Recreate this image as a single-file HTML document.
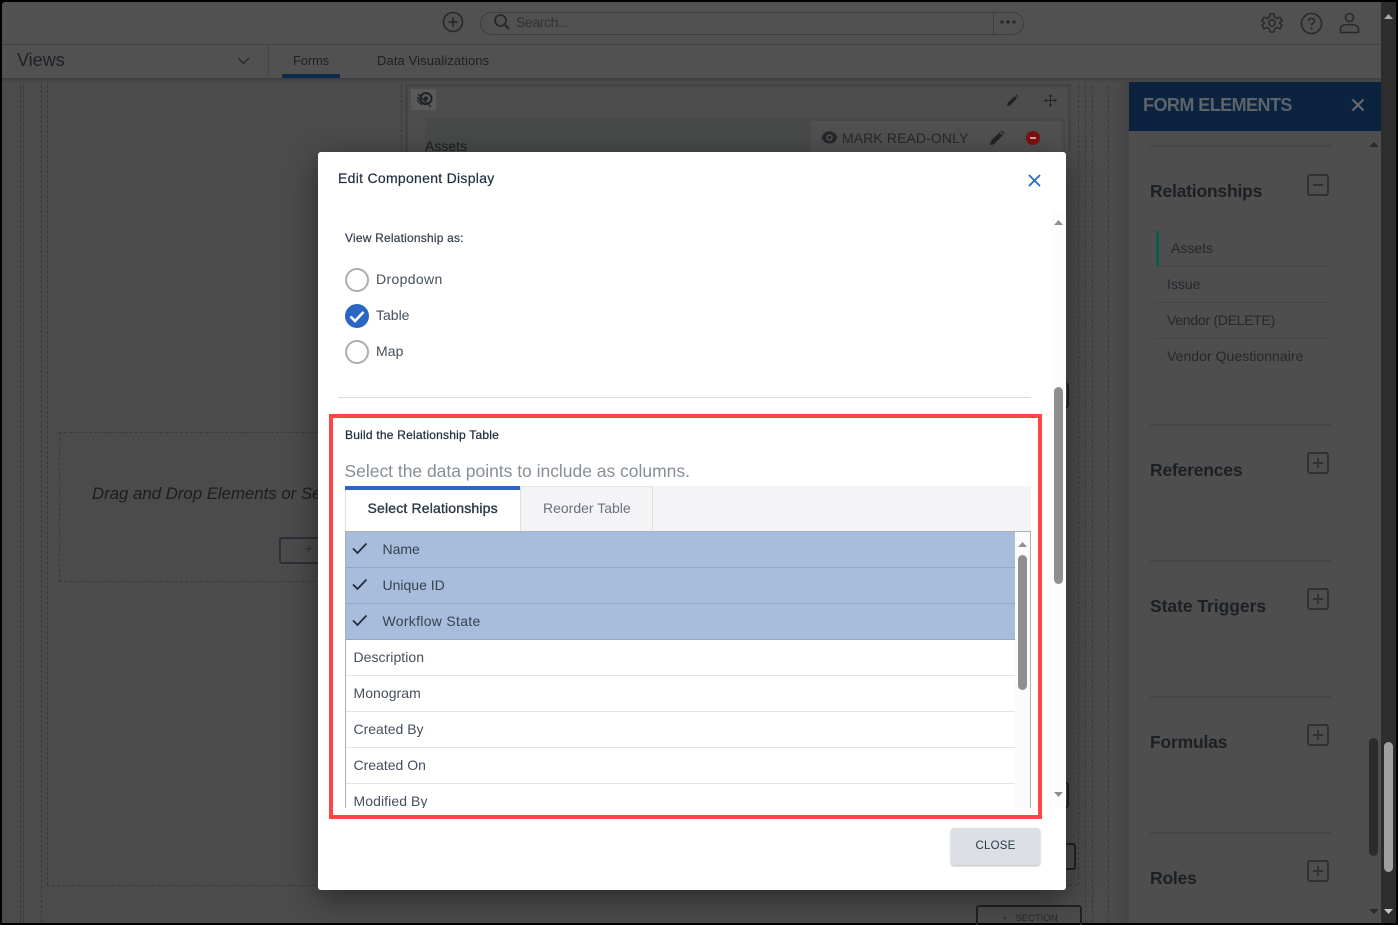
<!DOCTYPE html>
<html><head><meta charset="utf-8"><style>
*{box-sizing:border-box}
html,body{margin:0;padding:0;width:1398px;height:925px;overflow:hidden;background:#000}
body{position:relative;font-family:"Liberation Sans",sans-serif}
.a{position:absolute}
.t{position:absolute;white-space:nowrap;line-height:20px;height:20px}
.row{position:absolute;left:346px;width:669px;height:36px;background:#fff;border-bottom:1px solid #e2e4e7}
.sel{background:#a8bcdc;border-bottom:1px solid #93a6c6}
.dv{position:absolute;width:0;border-left:1px dashed #3a3a3a}
.h{font-size:17.5px;font-weight:bold;color:#1c2024;letter-spacing:-.2px}
svg{position:absolute;overflow:visible}
</style></head><body>
<div class="a" style="left:2px;top:2px;width:1394px;height:921px;background:#4b4b4b;overflow:hidden;border-radius:3px 0 0 0"></div>

<!-- background structure -->
<div class="dv" style="left:20px;top:80px;height:843px"></div>
<div class="a" style="left:23px;top:80px;width:1px;height:843px;background:#404040"></div>
<div class="dv" style="left:41px;top:80px;height:843px"></div>
<div class="dv" style="left:47px;top:80px;height:805px"></div>
<div class="a" style="left:47px;top:885px;width:1030px;border-top:1px dashed #3a3a3a"></div>
<div class="dv" style="left:401px;top:80px;height:72px"></div>
<div class="a" style="left:59px;top:432px;width:260px;height:150px;border:1px dashed #3a3a3a;border-right:0"></div>
<div class="t" style="left:92px;top:484px;font-size:16.8px;font-style:italic;color:#1a1d20;width:226px;overflow:hidden">Drag and Drop Elements or Se</div>
<div class="a" style="left:279px;top:537px;width:50px;height:27px;border:2px solid #2b3138;border-radius:3px"></div>
<div class="t" style="left:305px;top:539px;font-size:13px;color:#2b3138">+</div>

<div class="a" style="left:405px;top:84px;width:666px;height:68px;background:#4d4d4d;border:3px solid #444;border-bottom:0"></div>
<div class="a" style="left:411px;top:89px;width:25px;height:21px;background:#5a5a5a"></div>
<svg style="left:416px;top:91px" width="18" height="17" viewBox="0 0 18 17"><circle cx="10" cy="7.500" r="5.500" fill="none" stroke="#1f2226" stroke-width="2"/><circle cx="10" cy="7.500" r="2" fill="#1f2226"/><path d="M2 3L15 16M1 6L9 14M1 9L6 14" stroke="#1f2226" stroke-width="1.300"/></svg>
<svg style="left:1006px;top:94px" width="13" height="13" viewBox="0 0 13 13"><path d="M1 12L1.600 9L8.500 2L11 4.500L4 11.500Z M9.500 1L10.500 .4L12.600 2.500L12 3.500Z" fill="#202428"/></svg>
<svg style="left:1044px;top:94px" width="13" height="13" viewBox="0 0 13 13"><path d="M6.500 1V12M1 6.500H12" stroke="#202428" stroke-width="1"/><path d="M6.500 0L4.500 2.500H8.500ZM6.500 13L4.500 10.500H8.500ZM0 6.500L2.500 4.500V8.500ZM13 6.500L10.500 4.500V8.500Z" fill="#202428"/></svg>
<div class="a" style="left:425px;top:118px;width:640px;height:34px;background:#474a48"></div>
<div class="a" style="left:811px;top:121px;width:251px;height:31px;background:#505050"></div>
<div class="t" style="left:425px;top:136px;font-size:14px;color:#1a1d20">Assets</div>
<svg style="left:821px;top:130px" width="17" height="15" viewBox="0 0 17 15"><path d="M.5 7.500C3 2 5.500 1.500 8.500 1.500C11.500 1.500 14 2 16.500 7.500C14 13 11.500 13.500 8.500 13.500C5.500 13.500 3 13 .5 7.500Z" fill="#24282c"/><circle cx="8.500" cy="7.500" r="3.300" fill="#505050"/><circle cx="8.500" cy="7.500" r="1.700" fill="#24282c"/></svg>
<div class="t" style="left:842px;top:128px;font-size:14px;color:#24282c;letter-spacing:.1px">MARK READ-ONLY</div>
<svg style="left:989px;top:130px" width="16" height="16" viewBox="0 0 16 16"><path d="M1 15L1.800 11L10.500 2.500L13.500 5.500L5 14.200Z M11.500 1.500L12.700 .6L15.400 3.300L14.500 4.500Z" fill="#202428"/></svg>
<div class="a" style="left:1026px;top:131px;width:14px;height:14px;border-radius:7px;background:#7d1010"></div>
<div class="a" style="left:1030px;top:137px;width:6px;height:2px;background:#c9a0a0"></div>

<div class="dv" style="left:1078px;top:80px;height:805px"></div>
<div class="dv" style="left:1085px;top:80px;height:843px"></div>
<div class="dv" style="left:1092px;top:80px;height:843px"></div>
<div class="dv" style="left:1108px;top:80px;height:843px"></div>
<div class="a" style="left:1060px;top:383px;width:9px;height:25px;border:2px solid #1f2226;border-left:0;border-radius:0 3px 3px 0"></div>
<div class="a" style="left:1060px;top:782px;width:9px;height:26px;border:2px solid #1f2226;border-left:0;border-radius:0 3px 3px 0"></div>
<div class="a" style="left:1060px;top:843px;width:16px;height:27px;border:2px solid #1f2226;border-left:0;border-radius:0 3px 3px 0"></div>
<div class="a" style="left:976px;top:905px;width:106px;height:24px;border:2px solid #1f2226;border-radius:3px"></div>
<div class="t" style="left:1002px;top:909px;font-size:9.500px;color:#24282c">+&nbsp;&nbsp;&nbsp;SECTION</div>

<!-- right panel -->
<div class="a" style="left:1115px;top:80px;width:14px;height:843px;background:linear-gradient(90deg,#4b4b4b,#454545)"></div>
<div class="a" style="left:1129px;top:131px;width:252px;height:792px;background:#4e4e4e"></div>
<div class="a" style="left:1129px;top:82px;width:252px;height:49px;background:#0c2340"></div>
<div class="t" style="left:1143px;top:95px;font-size:18px;font-weight:bold;color:#5d636b;letter-spacing:-.55px">FORM ELEMENTS</div>
<svg style="left:1352px;top:99px" width="12" height="12" viewBox="0 0 12 12"><path d="M.5 .5L11.500 11.500M11.500 .5L.5 11.500" stroke="#666b72" stroke-width="2"/></svg>
<div class="a" style="left:1150px;top:145px;width:181px;height:2px;background:#464646"></div>
<div class="t h" style="left:1150px;top:181px">Relationships</div>
<div class="a" style="left:1307px;top:174px;width:22px;height:22px;border:2px solid #2e3237;border-radius:3px"></div>
<div class="a" style="left:1313px;top:184px;width:10px;height:2px;background:#2e3237"></div>
<div class="a" style="left:1156px;top:231px;width:3px;height:36px;background:#0a5a50"></div>
<div class="a" style="left:1156px;top:266px;width:175px;height:1px;background:#444"></div>
<div class="a" style="left:1156px;top:302px;width:175px;height:1px;background:#444"></div>
<div class="a" style="left:1156px;top:338px;width:175px;height:1px;background:#444"></div>
<div class="t" style="left:1171px;top:238px;font-size:14px;color:#24282c">Assets</div>
<div class="t" style="left:1167px;top:274px;font-size:14px;color:#24282c">Issue</div>
<div class="t" style="left:1167px;top:310px;font-size:14px;color:#24282c;letter-spacing:-.27px">Vendor (DELETE)</div>
<div class="t" style="left:1167px;top:346px;font-size:14px;color:#24282c;letter-spacing:.05px">Vendor Questionnaire</div>

<div class="a" style="left:1150px;top:424px;width:181px;height:2px;background:#464646"></div>
<div class="t h" style="left:1150px;top:460px">References</div>
<div class="a" style="left:1150px;top:560px;width:181px;height:2px;background:#464646"></div>
<div class="t h" style="left:1150px;top:596px;letter-spacing:-.05px">State Triggers</div>
<div class="a" style="left:1150px;top:696px;width:181px;height:2px;background:#464646"></div>
<div class="t h" style="left:1150px;top:732px">Formulas</div>
<div class="a" style="left:1150px;top:832px;width:181px;height:2px;background:#464646"></div>
<div class="t h" style="left:1150px;top:868px">Roles</div>
<svg style="left:1307px;top:452px" width="22" height="22" viewBox="0 0 22 22"><rect x="1" y="1" width="20" height="20" rx="2" fill="none" stroke="#2e3237" stroke-width="2"/><path d="M6 11H16M11 6V16" stroke="#2e3237" stroke-width="2"/></svg>
<svg style="left:1307px;top:588px" width="22" height="22" viewBox="0 0 22 22"><rect x="1" y="1" width="20" height="20" rx="2" fill="none" stroke="#2e3237" stroke-width="2"/><path d="M6 11H16M11 6V16" stroke="#2e3237" stroke-width="2"/></svg>
<svg style="left:1307px;top:724px" width="22" height="22" viewBox="0 0 22 22"><rect x="1" y="1" width="20" height="20" rx="2" fill="none" stroke="#2e3237" stroke-width="2"/><path d="M6 11H16M11 6V16" stroke="#2e3237" stroke-width="2"/></svg>
<svg style="left:1307px;top:860px" width="22" height="22" viewBox="0 0 22 22"><rect x="1" y="1" width="20" height="20" rx="2" fill="none" stroke="#2e3237" stroke-width="2"/><path d="M6 11H16M11 6V16" stroke="#2e3237" stroke-width="2"/></svg>
<div class="a" style="left:1369px;top:738px;width:9px;height:118px;background:#2b2b2b;border-radius:5px"></div>
<svg style="left:1369px;top:141px" width="10" height="6"><path d="M0 6L5 1L10 6Z" fill="#2a2a2a"/></svg>
<svg style="left:1369px;top:909px" width="10" height="6"><path d="M0 0L5 5L10 0Z" fill="#2a2a2a"/></svg>

<!-- page scrollbar -->
<div class="a" style="left:1381px;top:2px;width:15px;height:921px;background:#2d2d2d"></div>
<div class="a" style="left:1384px;top:742px;width:9px;height:130px;background:#a0a0a0;border-radius:5px"></div>
<svg style="left:1384px;top:13px" width="9" height="6"><path d="M0 6L4.500 1L9 6Z" fill="#a8a8a8"/></svg>
<svg style="left:1384px;top:909px" width="9" height="6"><path d="M0 0L4.500 5L9 0Z" fill="#c8c8c8"/></svg>

<!-- top bars -->
<div class="a" style="left:2px;top:78px;width:1379px;height:4px;background:linear-gradient(#3c3c3c,#4b4b4b)"></div>
<div class="a" style="left:2px;top:2px;width:1379px;height:76px;background:#515151;border-radius:3px 0 0 0"></div>
<div class="a" style="left:2px;top:44px;width:1379px;height:1px;background:#434343"></div>
<svg style="left:442px;top:11px" width="22" height="22" viewBox="0 0 22 22"><circle cx="11" cy="11" r="9.500" fill="none" stroke="#26292d" stroke-width="1.600"/><path d="M6.500 11H15.500M11 6.500V15.500" stroke="#26292d" stroke-width="1.800"/></svg>
<div class="a" style="left:480px;top:12px;width:544px;height:23px;border:1px solid #3b3e41;border-radius:12px"></div>
<div class="a" style="left:993px;top:12px;width:1px;height:23px;background:#3b3e41"></div>
<svg style="left:493px;top:13px" width="18" height="18" viewBox="0 0 18 18"><circle cx="7.500" cy="7.500" r="5.500" fill="none" stroke="#26292d" stroke-width="1.800"/><path d="M11.500 11.500L16 16" stroke="#26292d" stroke-width="2"/></svg>
<div class="t" style="left:516px;top:12px;font-size:14px;color:#2e3236;letter-spacing:-.4px">Search...</div>
<svg style="left:1000px;top:20px" width="16" height="5"><circle cx="2" cy="2" r="1.700" fill="#26292d"/><circle cx="8" cy="2" r="1.700" fill="#26292d"/><circle cx="14" cy="2" r="1.700" fill="#26292d"/></svg>
<svg style="left:1261px;top:12px" width="22" height="22" viewBox="0 0 22 22"><path d="M9 2H13L13.600 5L16 6.300L19 5.300L21 8.700L18.700 10.800V11.200L21 13.300L19 16.700L16 15.700L13.600 17L13 20H9L8.400 17L6 15.700L3 16.700L1 13.300L3.300 11.200V10.800L1 8.700L3 5.300L6 6.300L8.400 5Z" fill="none" stroke="#26292d" stroke-width="1.500" stroke-linejoin="round"/><circle cx="11" cy="11" r="3.200" fill="none" stroke="#26292d" stroke-width="1.500"/></svg>
<svg style="left:1300px;top:12px" width="23" height="23" viewBox="0 0 23 23"><circle cx="11.500" cy="11.500" r="10" fill="none" stroke="#26292d" stroke-width="1.600"/><path d="M8.500 9C8.500 5.500 14.500 5.500 14.500 9C14.500 11 11.500 11 11.500 13.500" fill="none" stroke="#26292d" stroke-width="1.600"/><circle cx="11.500" cy="16.500" r="1.100" fill="#26292d"/></svg>
<svg style="left:1339px;top:12px" width="21" height="22" viewBox="0 0 21 22"><circle cx="10.500" cy="5.500" r="4" fill="none" stroke="#26292d" stroke-width="1.600"/><path d="M1.500 20.500V17C1.500 13.500 5 12.500 10.500 12.500C16 12.500 19.500 13.500 19.500 17V20.500Z" fill="none" stroke="#26292d" stroke-width="1.600" stroke-linejoin="round"/></svg>
<div class="t" style="left:17px;top:50px;font-size:18px;color:#1d2024">Views</div>
<svg style="left:237px;top:57px" width="13" height="8" viewBox="0 0 13 8"><path d="M1 1L6.500 6.500L12 1" fill="none" stroke="#26292d" stroke-width="1.400"/></svg>
<div class="a" style="left:268px;top:45px;width:1px;height:32px;background:#444"></div>
<div class="t" style="left:293px;top:51px;font-size:12.500px;color:#1d2024;transform-origin:left;transform:scaleX(1.020)">Forms</div>
<div class="t" style="left:377px;top:51px;font-size:13px;color:#1d2024;letter-spacing:.1px">Data Visualizations</div>
<div class="a" style="left:282px;top:74px;width:58px;height:4px;background:#0e2a4e"></div>

<!-- modal -->
<div class="a" style="left:318px;top:152px;width:748px;height:738px;background:#fff;border-radius:3px;box-shadow:0 8px 30px rgba(0,0,0,.45)"></div>
<div class="t" style="left:338px;top:168px;font-size:14px;color:#1f2d3d;letter-spacing:.29px;-webkit-text-stroke:.2px #1f2d3d">Edit Component Display</div>
<svg style="left:1028px;top:174px" width="13" height="13" viewBox="0 0 13 13"><path d="M1 1L12 12M12 1L1 12" stroke="#2a66c4" stroke-width="1.800"/></svg>
<div class="t" style="left:345px;top:228px;font-size:12px;color:#3a4654;letter-spacing:.2px;-webkit-text-stroke:.25px #3a4654">View Relationship as:</div>

<div class="a" style="left:345px;top:268px;width:24px;height:24px;border:2px solid #a9aeb3;border-radius:50%"></div>
<div class="t" style="left:376px;top:269px;font-size:14px;color:#45505c;letter-spacing:.35px">Dropdown</div>
<div class="a" style="left:345px;top:304px;width:24px;height:24px;background:#2a66c4;border-radius:50%"></div>
<svg style="left:345px;top:304px" width="24" height="24" viewBox="0 0 24 24"><path d="M5.500 12.500L10 17L18.500 8" fill="none" stroke="#fff" stroke-width="2.600"/></svg>
<div class="t" style="left:376px;top:305px;font-size:14px;color:#45505c">Table</div>
<div class="a" style="left:345px;top:340px;width:24px;height:24px;border:2px solid #a9aeb3;border-radius:50%"></div>
<div class="t" style="left:376px;top:341px;font-size:14px;color:#45505c;letter-spacing:.1px">Map</div>
<div class="a" style="left:338px;top:397px;width:693px;height:1px;background:#dcdcdc"></div>

<!-- modal scrollbar -->
<div class="a" style="left:1052px;top:212px;width:14px;height:596px;background:#fcfcfc"></div>
<div class="a" style="left:1054px;top:387px;width:9px;height:197px;background:#8f8f8f;border-radius:5px"></div>
<svg style="left:1054px;top:219px" width="9" height="6"><path d="M0 6L4.500 1L9 6Z" fill="#8f8f8f"/></svg>
<svg style="left:1054px;top:792px" width="9" height="6"><path d="M0 0L4.500 5L9 0Z" fill="#8f8f8f"/></svg>

<!-- red frame -->
<div class="a" style="left:329px;top:414px;width:713px;height:405px;border:4px solid #ff4545"></div>
<div class="t" style="left:345px;top:425px;font-size:12px;color:#1f2d3d;letter-spacing:.22px;-webkit-text-stroke:.25px #1f2d3d">Build the Relationship Table</div>
<div class="t" style="left:344.500px;top:461px;font-size:17.500px;color:#868e96;letter-spacing:-.02px">Select the data points to include as columns.</div>

<div class="a" style="left:345px;top:486px;width:686px;height:45px;background:#f4f4f6"></div>
<div class="a" style="left:345px;top:486px;width:176px;height:46px;background:#fff;border-left:1px solid #e0e0e0;border-right:1px solid #e0e0e0"></div>
<div class="a" style="left:345px;top:486px;width:175px;height:4px;background:#2a66c4"></div>
<div class="a" style="left:521px;top:486px;width:132px;height:45px;border-right:1px solid #e0e0e0;border-top:1px solid #e6e6e6"></div>
<div class="t" style="left:367.500px;top:498px;font-size:14px;color:#2b3845;letter-spacing:.17px;-webkit-text-stroke:.35px #2b3845">Select Relationships</div>
<div class="t" style="left:543px;top:498px;font-size:14px;color:#68727c">Reorder Table</div>

<div class="a" style="left:345px;top:531px;width:686px;height:1px;background:#aab0b6"></div>
<div class="a" style="left:345px;top:531px;width:1px;height:277px;background:#aab0b6"></div>
<div class="a" style="left:1030px;top:531px;width:1px;height:277px;background:#aab0b6"></div>
<div class="row sel" style="top:532px"></div>
<div class="row sel" style="top:568px"></div>
<div class="row sel" style="top:604px"></div>
<div class="row" style="top:640px"></div>
<div class="row" style="top:676px"></div>
<div class="row" style="top:712px"></div>
<div class="row" style="top:748px"></div>
<div class="a" style="left:346px;top:784px;width:669px;height:24px;overflow:hidden"><div class="t" style="left:7.500px;top:7px;font-size:14px;color:#45505c;letter-spacing:.08px">Modified By</div></div>
<svg style="left:352px;top:542px" width="16" height="12" viewBox="0 0 16 12"><path d="M1 6.500L5.500 11L14.500 1.500" fill="none" stroke="#1f2d3d" stroke-width="1.800"/></svg>
<svg style="left:352px;top:578px" width="16" height="12" viewBox="0 0 16 12"><path d="M1 6.500L5.500 11L14.500 1.500" fill="none" stroke="#1f2d3d" stroke-width="1.800"/></svg>
<svg style="left:352px;top:614px" width="16" height="12" viewBox="0 0 16 12"><path d="M1 6.500L5.500 11L14.500 1.500" fill="none" stroke="#1f2d3d" stroke-width="1.800"/></svg>
<div class="t" style="left:382.500px;top:539px;font-size:14px;color:#36434f">Name</div>
<div class="t" style="left:382.500px;top:575px;font-size:14px;color:#36434f">Unique ID</div>
<div class="t" style="left:382.500px;top:611px;font-size:14px;color:#36434f;letter-spacing:.3px">Workflow State</div>
<div class="t" style="left:353.500px;top:647px;font-size:14px;color:#45505c;letter-spacing:.05px">Description</div>
<div class="t" style="left:353.500px;top:683px;font-size:14px;color:#45505c;letter-spacing:.05px">Monogram</div>
<div class="t" style="left:353.500px;top:719px;font-size:14px;color:#45505c">Created By</div>
<div class="t" style="left:353.500px;top:755px;font-size:14px;color:#45505c">Created On</div>
<div class="a" style="left:1015px;top:532px;width:15px;height:276px;background:#fbfbfb"></div>
<div class="a" style="left:1018px;top:555px;width:9px;height:135px;background:#8f8f8f;border-radius:5px"></div>
<svg style="left:1018px;top:541px" width="9" height="6"><path d="M0 6L4.500 1L9 6Z" fill="#8f8f8f"/></svg>

<div class="a" style="left:951px;top:828px;width:89px;height:37px;background:#dcdfe3;border-radius:3px;box-shadow:0 1px 2px rgba(0,0,0,.3)"></div>
<div class="t" style="left:951px;top:836px;width:89px;text-align:center;font-size:11.500px;color:#2b3a4a;letter-spacing:.2px">CLOSE</div>
</body></html>
